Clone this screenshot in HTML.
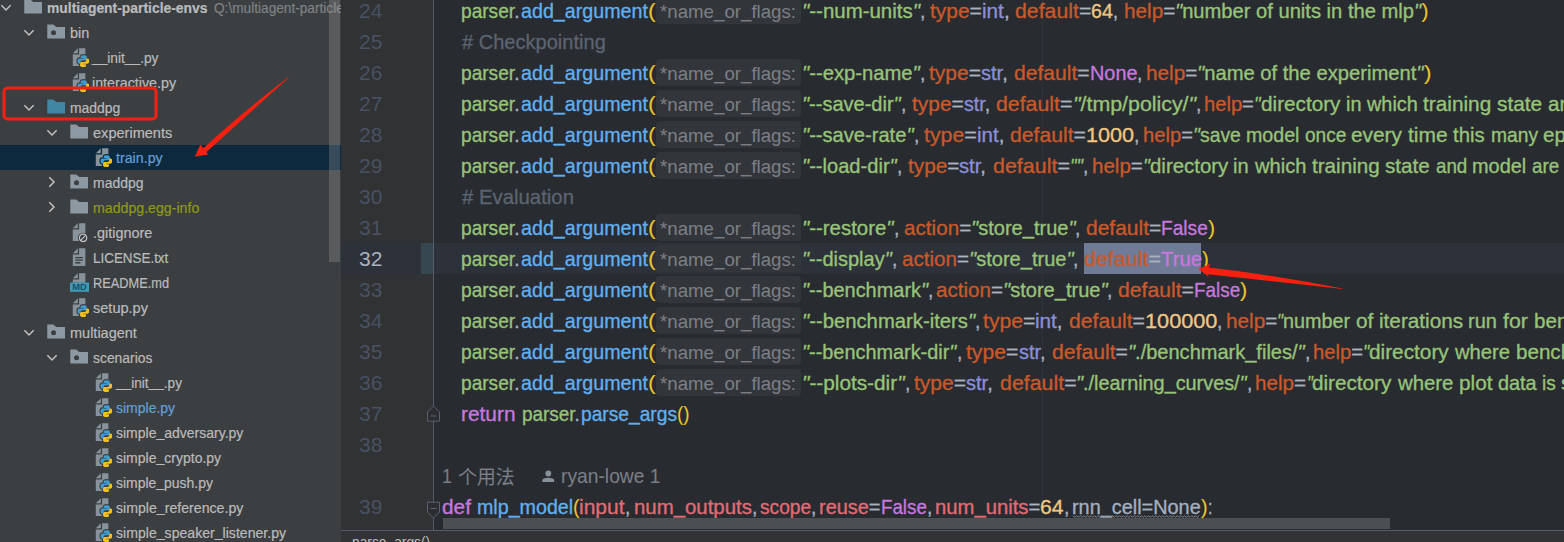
<!DOCTYPE html>
<html lang="zh"><head><meta charset="utf-8"><title>PyCharm</title>
<style>
html,body{margin:0;padding:0}
body{width:1564px;height:542px;overflow:hidden;position:relative;background:#282b30;font-family:"Liberation Sans", "Noto Sans CJK SC", sans-serif;}
#tree{position:absolute;left:0;top:0;width:341px;height:542px;background:#3c3f41;overflow:hidden}
.tr{position:absolute;left:0;width:341px;height:25px;line-height:25px;font-size:14.5px;white-space:pre}
.tr.sel{background:#0d293e}
.ic{position:absolute;overflow:visible}
.tt{position:absolute;top:1px;-webkit-text-stroke:0.2px currentColor;transform-origin:0 50%;white-space:pre}
#sb{position:absolute;left:329px;top:0;width:11.1px;height:262px;background:rgba(166,166,166,0.28)}
#gut{position:absolute;left:341px;top:0;width:92px;height:530px;background:#303234}
#gline{position:absolute;left:433px;top:0;width:1px;height:530px;background:#555a6b}
.gn{position:absolute;left:358.6px;height:31px;line-height:31px;font-size:21px;color:#495162;transform-origin:0 50%;white-space:pre}
.gn.cur{color:#abb2bf}
#ed{position:absolute;left:0;top:0;width:1564px;height:530px;overflow:hidden}
.ln{position:absolute;left:0;width:1564px;height:31px;line-height:31px;font-size:21px;white-space:pre;-webkit-text-stroke:0.35px currentColor}
.k{position:absolute;top:0;transform-origin:0 50%;white-space:pre}
.k i{font-style:normal}
u{text-decoration:none;position:relative;top:-0.07em}
em{font-style:italic}
.hb{position:absolute;left:656px;top:2px;width:145.3px;height:27px;border-radius:4px;background:#323539}
.ht{position:absolute;left:660.4px;top:1px;font-size:19.25px;color:#7b7e84;transform-origin:0 50%;white-space:pre;-webkit-text-stroke:0.1px currentColor}
.y,.h{-webkit-text-stroke:0.1px currentColor}
.g{color:#98c379}
.b{color:#61afef}
.y{color:#e8c52e}
.o{color:#c8592b}
.p{color:#c678dd}
.u{color:#8a8fd8}
.w{color:#abb2bf}
.c{color:#5c6370}
.r{color:#e06c75}
.n{color:#efc783}
.h{color:#7b7e84}
.d{color:#a4b0c0}

#curg{position:absolute;left:341px;top:243px;width:80px;height:31px;background:#2c313a}
#curm{position:absolute;left:421px;top:243px;width:12px;height:31px;background:#36474f}
#curl{position:absolute;left:434px;top:243px;width:1130px;height:31px;background:#2c313a}
#selbg{position:absolute;left:1083.6px;top:243px;width:117.6px;height:31px;background:#6f7b97}
#margin{position:absolute;left:1042px;top:0;width:1px;height:530px;background:#2f3238}
#hs{position:absolute;left:443px;top:518px;width:946.5px;height:10.8px;background:#4b4f52}
#bot{position:absolute;left:341px;top:530px;width:1223px;height:12px;background:#313335;border-top:1px solid #555b6e;box-sizing:border-box;overflow:hidden}
#bc{position:absolute;left:351.6px;top:529.8px;font-size:14.5px;line-height:25px;color:#bbbbbb;white-space:pre;transform-origin:0 50%}
#ann{position:absolute;left:0;top:0}
</style></head>
<body>
<svg width="0" height="0" style="position:absolute"><defs>
<symbol id="folder" viewBox="0 0 16 16"><path d="M1,2 H5.7 L8.2,4.05 H15.1 V13 H1 Z" fill="#8d99a2"/></symbol>
<symbol id="folderteal" viewBox="0 0 16 16"><path d="M1,2 H5.7 L8.2,4.05 H15.1 V13 H1 Z" fill="#3f87a2"/></symbol>
<symbol id="folderdot" viewBox="0 0 16 16"><path d="M1,2 H5.7 L8.2,4.05 H15.1 V13 H1 Z" fill="#8d99a2"/><circle cx="6" cy="8.55" r="2" fill="#3c3f41"/></symbol>
<symbol id="py" viewBox="0 0 16 16"><path d="M7,1 L3,5 H7 Z M8,1 V6 H3 V15 H13 V1 Z" fill="#87929a"/>
<g transform="translate(6.75,6.5) scale(0.78)"><path d="M6,0 C3.5,0 3.3,1.1 3.3,1.6 V2.9 H6.1 V3.3 H2.1 C1,3.3 0,4 0,6 C0,8 0.9,8.7 1.9,8.7 H3.1 V7.1 C3.1,6 4,5.1 5,5.1 H7.8 C8.7,5.1 9.4,4.4 9.4,3.5 V1.6 C9.4,0.7 8.5,0 6,0 Z M6,12 C8.5,12 8.7,10.9 8.7,10.4 V9.1 H5.9 V8.7 H9.9 C11,8.7 12,8 12,6 C12,4 11.1,3.3 10.1,3.3 H8.9 V4.9 C8.9,6 8,6.9 7,6.9 H4.2 C3.3,6.9 2.6,7.6 2.6,8.5 V10.4 C2.6,11.3 3.5,12 6,12 Z" fill="var(--obg,#3c3f41)" stroke="var(--obg,#3c3f41)" stroke-width="2.2" stroke-linejoin="round"/>
<path d="M6,0 C3.5,0 3.3,1.1 3.3,1.6 V2.9 H6.1 V3.3 H2.1 C1,3.3 0,4 0,6 C0,8 0.9,8.7 1.9,8.7 H3.1 V7.1 C3.1,6 4,5.1 5,5.1 H7.8 C8.7,5.1 9.4,4.4 9.4,3.5 V1.6 C9.4,0.7 8.5,0 6,0 Z" fill="#3e9cd0"/><path d="M6,12 C8.5,12 8.7,10.9 8.7,10.4 V9.1 H5.9 V8.7 H9.9 C11,8.7 12,8 12,6 C12,4 11.1,3.3 10.1,3.3 H8.9 V4.9 C8.9,6 8,6.9 7,6.9 H4.2 C3.3,6.9 2.6,7.6 2.6,8.5 V10.4 C2.6,11.3 3.5,12 6,12 Z" fill="#f3c31c"/></g></symbol>
<symbol id="txt" viewBox="0 0 16 16"><path d="M7,1 L3,5 H7 Z M8,1 V6 H3 V15 H13 V1 Z" fill="#87929a"/><path d="M5,8.5 H11 M5,10.5 H11 M5,12.5 H9" stroke="#3c3f41" stroke-width="1"/></symbol>
<symbol id="git" viewBox="0 0 16 16"><path d="M7,1 L3,5 H7 Z M8,1 V6 H3 V15 H13 V1 Z" fill="#87929a"/><circle cx="11.2" cy="12.6" r="4.1" fill="#3c3f41"/><circle cx="11.2" cy="12.6" r="2.9" fill="none" stroke="#c4c6c8" stroke-width="0.95"/><path d="M9.2,14.6 L13.2,10.6" stroke="#c4c6c8" stroke-width="0.95"/></symbol>
<symbol id="md" viewBox="0 0 16 16"><path d="M7,1 L3,5 H7 Z M8,1 V6 H3 V8.6 H13 V1 Z" fill="#87929a"/><rect x="0.8" y="8.4" width="15.1" height="7.3" fill="#3f9bb9"/><text x="8.35" y="14.6" text-anchor="middle" font-family="Liberation Sans, sans-serif" font-size="6.6" font-weight="bold" fill="#1e4f63" textLength="11.6" lengthAdjust="spacingAndGlyphs">MD</text></symbol>
<symbol id="person" viewBox="0 0 12 12"><circle cx="6" cy="3.5" r="2.9" fill="#87919a"/><path d="M0.2,11.8 V10.2 Q0.2,7.6 6,7.6 Q11.8,7.6 11.8,10.2 V11.8 Z" fill="#87919a"/></symbol>
</defs></svg>
<div id="ed">
<div id="curl"></div><div id="margin"></div><div id="selbg"></div>
<div class="ln" style="top:-5px"><span class="k" style="left:461.3px;transform:scaleX(0.9101)"><i class="g">parser</i><i class="w">.</i></span><span class="k b" style="left:520.8px;transform:scaleX(0.9370)">add<u>_</u>argument</span><span class="k y" style="left:647.7px;transform:scaleX(1.0857)">(</span><span class="hb"></span><span class="ht" style="transform:scaleX(0.9701)">*name<u>_</u>or<u>_</u>flags:</span><span class="k g" style="left:802.3px;transform:scaleX(0.9735)"><em>"</em>--num-units<em>"</em></span><span class="k w" style="left:920.2px;transform:scaleX(0.9200)">, </span><span class="k" style="left:929.8px;transform:scaleX(0.9968)"><i class="o">type</i><i class="w">=</i></span><span class="k" style="left:981.6px;transform:scaleX(0.9864)"><i class="u">int</i><i class="w">, </i></span><span class="k" style="left:1015.0px;transform:scaleX(1.0129)"><i class="o">default</i><i class="w">=</i></span><span class="k" style="left:1091.3px;transform:scaleX(0.9335)"><i class="n">64</i><i class="w">, </i></span><span class="k" style="left:1124.0px;transform:scaleX(0.9891)"><i class="o">help</i><i class="w">=</i></span><span class="k g" style="left:1175.4px;transform:scaleX(0.9593)"><em>"</em>number of units in the mlp<em>"</em></span><span class="k y" style="left:1421.5px;transform:scaleX(1.0000)">)</span></div>
<div class="ln" style="top:26px"><span class="k c" style="left:461.8px;transform:scaleX(0.9548)"># Checkpointing</span></div>
<div class="ln" style="top:57px"><span class="k" style="left:461.3px;transform:scaleX(0.9101)"><i class="g">parser</i><i class="w">.</i></span><span class="k b" style="left:520.8px;transform:scaleX(0.9370)">add<u>_</u>argument</span><span class="k y" style="left:647.7px;transform:scaleX(1.0857)">(</span><span class="hb"></span><span class="ht" style="transform:scaleX(0.9701)">*name<u>_</u>or<u>_</u>flags:</span><span class="k g" style="left:802.3px;transform:scaleX(0.9625)"><em>"</em>--exp-name<em>"</em></span><span class="k w" style="left:920.0px;transform:scaleX(0.9200)">, </span><span class="k" style="left:928.5px;transform:scaleX(1.0006)"><i class="o">type</i><i class="w">=</i></span><span class="k" style="left:980.5px;transform:scaleX(0.9543)"><i class="u">str</i><i class="w">, </i></span><span class="k" style="left:1013.9px;transform:scaleX(1.0036)"><i class="o">default</i><i class="w">=</i></span><span class="k p" style="left:1089.5px;transform:scaleX(0.9462)">None</span><span class="k w" style="left:1137.0px;transform:scaleX(0.9200)">, </span><span class="k" style="left:1145.7px;transform:scaleX(0.9871)"><i class="o">help</i><i class="w">=</i></span><span class="k g" style="left:1197.0px;transform:scaleX(0.9616)"><em>"</em>name of the experiment<em>"</em></span><span class="k y" style="left:1423.5px;transform:scaleX(1.0714)">)</span></div>
<div class="ln" style="top:88px"><span class="k" style="left:461.3px;transform:scaleX(0.9101)"><i class="g">parser</i><i class="w">.</i></span><span class="k b" style="left:520.8px;transform:scaleX(0.9370)">add<u>_</u>argument</span><span class="k y" style="left:647.7px;transform:scaleX(1.0857)">(</span><span class="hb"></span><span class="ht" style="transform:scaleX(0.9701)">*name<u>_</u>or<u>_</u>flags:</span><span class="k g" style="left:802.3px;transform:scaleX(0.9528)"><em>"</em>--save-dir<em>"</em></span><span class="k w" style="left:901.0px;transform:scaleX(0.9200)">, </span><span class="k" style="left:911.8px;transform:scaleX(0.9968)"><i class="o">type</i><i class="w">=</i></span><span class="k" style="left:963.6px;transform:scaleX(0.9371)"><i class="u">str</i><i class="w">, </i></span><span class="k" style="left:996.4px;transform:scaleX(1.0142)"><i class="o">default</i><i class="w">=</i></span><span class="k g" style="left:1072.8px;transform:scaleX(1.0164)"><em>"</em>/tmp/policy/<em>"</em></span><span class="k w" style="left:1195.9px;transform:scaleX(0.9200)">, </span><span class="k" style="left:1204.0px;transform:scaleX(0.9602)"><i class="o">help</i><i class="w">=</i></span><span class="k g" style="left:1253.9px;transform:scaleX(0.8837)"><em>"</em></span><span class="k g" style="left:1260.5px;transform:scaleX(0.9866)">directory </span><span class="k g" style="left:1345.7px;transform:scaleX(0.9465)">in </span><span class="k g" style="left:1366.7px;transform:scaleX(0.9457)">which </span><span class="k g" style="left:1423.0px;transform:scaleX(0.9904)">training </span><span class="k g" style="left:1497.0px;transform:scaleX(0.9927)">state </span><span class="k" style="left:1548.0px;transform:scaleX(0.9800)"><i class="g">and </i><i class="g">model </i><i class="g">are </i><i class="g">saved<em>"</em></i></span></div>
<div class="ln" style="top:119px"><span class="k" style="left:461.3px;transform:scaleX(0.9101)"><i class="g">parser</i><i class="w">.</i></span><span class="k b" style="left:520.8px;transform:scaleX(0.9370)">add<u>_</u>argument</span><span class="k y" style="left:647.7px;transform:scaleX(1.0857)">(</span><span class="hb"></span><span class="ht" style="transform:scaleX(0.9701)">*name<u>_</u>or<u>_</u>flags:</span><span class="k g" style="left:802.3px;transform:scaleX(0.9576)"><em>"</em>--save-rate<em>"</em></span><span class="k w" style="left:913.8px;transform:scaleX(0.9200)">, </span><span class="k" style="left:923.9px;transform:scaleX(1.0160)"><i class="o">type</i><i class="w">=</i></span><span class="k" style="left:976.7px;transform:scaleX(0.9776)"><i class="u">int</i><i class="w">, </i></span><span class="k" style="left:1009.8px;transform:scaleX(1.0076)"><i class="o">default</i><i class="w">=</i></span><span class="k n" style="left:1085.7px;transform:scaleX(1.0296)">1000</span><span class="k w" style="left:1133.8px;transform:scaleX(0.9200)">, </span><span class="k" style="left:1142.6px;transform:scaleX(0.9621)"><i class="o">help</i><i class="w">=</i></span><span class="k g" style="left:1192.6px;transform:scaleX(0.9238)"><em>"</em></span><span class="k g" style="left:1199.5px;transform:scaleX(0.9203)">save </span><span class="k g" style="left:1245.7px;transform:scaleX(0.9345)">model </span><span class="k g" style="left:1304.6px;transform:scaleX(0.9090)">once </span><span class="k g" style="left:1351.3px;transform:scaleX(0.9915)">every </span><span class="k g" style="left:1408.0px;transform:scaleX(0.9975)">time </span><span class="k g" style="left:1453.4px;transform:scaleX(0.9658)">this </span><span class="k g" style="left:1490.6px;transform:scaleX(0.9163)">many </span><span class="k" style="left:1543.0px;transform:scaleX(0.9800)"><i class="g">episodes </i><i class="g">are </i><i class="g">completed<em>"</em></i></span></div>
<div class="ln" style="top:150px"><span class="k" style="left:461.3px;transform:scaleX(0.9101)"><i class="g">parser</i><i class="w">.</i></span><span class="k b" style="left:520.8px;transform:scaleX(0.9370)">add<u>_</u>argument</span><span class="k y" style="left:647.7px;transform:scaleX(1.0857)">(</span><span class="hb"></span><span class="ht" style="transform:scaleX(0.9701)">*name<u>_</u>or<u>_</u>flags:</span><span class="k g" style="left:802.3px;transform:scaleX(0.9572)"><em>"</em>--load-dir<em>"</em></span><span class="k w" style="left:897.0px;transform:scaleX(0.9200)">, </span><span class="k" style="left:907.5px;transform:scaleX(0.9910)"><i class="o">type</i><i class="w">=</i></span><span class="k" style="left:959.0px;transform:scaleX(0.9600)"><i class="u">str</i><i class="w">, </i></span><span class="k" style="left:992.6px;transform:scaleX(1.0209)"><i class="o">default</i><i class="w">=</i></span><span class="k g" style="left:1069.5px;transform:scaleX(0.8712)"><em>"</em><em>"</em></span><span class="k w" style="left:1082.5px;transform:scaleX(0.9200)">, </span><span class="k" style="left:1091.8px;transform:scaleX(0.9775)"><i class="o">help</i><i class="w">=</i></span><span class="k g" style="left:1142.6px;transform:scaleX(0.9238)"><em>"</em></span><span class="k g" style="left:1149.5px;transform:scaleX(0.9715)">directory </span><span class="k g" style="left:1233.4px;transform:scaleX(0.9555)">in </span><span class="k g" style="left:1254.6px;transform:scaleX(0.9575)">which </span><span class="k g" style="left:1311.6px;transform:scaleX(0.9824)">training </span><span class="k g" style="left:1385.0px;transform:scaleX(0.9830)">state </span><span class="k g" style="left:1435.5px;transform:scaleX(0.8930)">and </span><span class="k g" style="left:1472.0px;transform:scaleX(0.9471)">model </span><span class="k g" style="left:1531.7px;transform:scaleX(0.8926)">are </span><span class="k g" style="left:1564.0px;transform:scaleX(0.9800)">loaded<em>"</em></span></div>
<div class="ln" style="top:181px"><span class="k c" style="left:461.8px;transform:scaleX(0.9689)"># Evaluation</span></div>
<div class="ln" style="top:212px"><span class="k" style="left:461.3px;transform:scaleX(0.9101)"><i class="g">parser</i><i class="w">.</i></span><span class="k b" style="left:520.8px;transform:scaleX(0.9370)">add<u>_</u>argument</span><span class="k y" style="left:647.7px;transform:scaleX(1.0857)">(</span><span class="hb"></span><span class="ht" style="transform:scaleX(0.9701)">*name<u>_</u>or<u>_</u>flags:</span><span class="k g" style="left:802.3px;transform:scaleX(0.9707)"><em>"</em>--restore<em>"</em></span><span class="k w" style="left:893.8px;transform:scaleX(0.9200)">, </span><span class="k" style="left:903.6px;transform:scaleX(0.9837)"><i class="o">action</i><i class="w">=</i></span><span class="k g" style="left:970.8px;transform:scaleX(0.9555)"><em>"</em>store<u>_</u>true<em>"</em></span><span class="k w" style="left:1075.4px;transform:scaleX(0.9200)">, </span><span class="k" style="left:1085.7px;transform:scaleX(0.9996)"><i class="o">default</i><i class="w">=</i></span><span class="k p" style="left:1161.0px;transform:scaleX(0.9112)">False</span><span class="k y" style="left:1207.8px;transform:scaleX(1.0143)">)</span></div>
<div class="ln" style="top:243px"><span class="k" style="left:461.3px;transform:scaleX(0.9101)"><i class="g">parser</i><i class="w">.</i></span><span class="k b" style="left:520.8px;transform:scaleX(0.9370)">add<u>_</u>argument</span><span class="k y" style="left:647.7px;transform:scaleX(1.0857)">(</span><span class="hb"></span><span class="ht" style="transform:scaleX(0.9701)">*name<u>_</u>or<u>_</u>flags:</span><span class="k g" style="left:802.3px;transform:scaleX(0.9516)"><em>"</em>--display<em>"</em></span><span class="k w" style="left:892.0px;transform:scaleX(0.9200)">, </span><span class="k" style="left:901.6px;transform:scaleX(0.9823)"><i class="o">action</i><i class="w">=</i></span><span class="k g" style="left:968.7px;transform:scaleX(0.9555)"><em>"</em>store<u>_</u>true<em>"</em></span><span class="k w" style="left:1073.3px;transform:scaleX(0.9200)">, </span><span class="k" style="left:1083.6px;transform:scaleX(1.0209)"><i class="o">default</i><i class="w">=</i></span><span class="k p" style="left:1160.5px;transform:scaleX(0.9692)">True</span><span class="k y" style="left:1201.6px;transform:scaleX(0.9714)">)</span></div>
<div class="ln" style="top:274px"><span class="k" style="left:461.3px;transform:scaleX(0.9101)"><i class="g">parser</i><i class="w">.</i></span><span class="k b" style="left:520.8px;transform:scaleX(0.9370)">add<u>_</u>argument</span><span class="k y" style="left:647.7px;transform:scaleX(1.0857)">(</span><span class="hb"></span><span class="ht" style="transform:scaleX(0.9701)">*name<u>_</u>or<u>_</u>flags:</span><span class="k g" style="left:802.3px;transform:scaleX(0.9497)"><em>"</em>--benchmark<em>"</em></span><span class="k w" style="left:928.4px;transform:scaleX(0.9200)">, </span><span class="k" style="left:935.7px;transform:scaleX(0.9823)"><i class="o">action</i><i class="w">=</i></span><span class="k g" style="left:1002.8px;transform:scaleX(0.9555)"><em>"</em>store<u>_</u>true<em>"</em></span><span class="k w" style="left:1107.4px;transform:scaleX(0.9200)">, </span><span class="k" style="left:1117.7px;transform:scaleX(1.0076)"><i class="o">default</i><i class="w">=</i></span><span class="k p" style="left:1193.6px;transform:scaleX(0.8995)">False</span><span class="k y" style="left:1239.8px;transform:scaleX(1.0286)">)</span></div>
<div class="ln" style="top:305px"><span class="k" style="left:461.3px;transform:scaleX(0.9101)"><i class="g">parser</i><i class="w">.</i></span><span class="k b" style="left:520.8px;transform:scaleX(0.9370)">add<u>_</u>argument</span><span class="k y" style="left:647.7px;transform:scaleX(1.0857)">(</span><span class="hb"></span><span class="ht" style="transform:scaleX(0.9701)">*name<u>_</u>or<u>_</u>flags:</span><span class="k g" style="left:802.3px;transform:scaleX(0.9646)"><em>"</em>--benchmark-iters<em>"</em></span><span class="k w" style="left:975.4px;transform:scaleX(0.9200)">, </span><span class="k" style="left:983.0px;transform:scaleX(1.0083)"><i class="o">type</i><i class="w">=</i></span><span class="k" style="left:1035.4px;transform:scaleX(0.9835)"><i class="u">int</i><i class="w">, </i></span><span class="k" style="left:1068.7px;transform:scaleX(1.0076)"><i class="o">default</i><i class="w">=</i></span><span class="k n" style="left:1144.6px;transform:scaleX(1.0331)">100000</span><span class="k w" style="left:1217.0px;transform:scaleX(0.9200)">, </span><span class="k" style="left:1225.7px;transform:scaleX(0.9871)"><i class="o">help</i><i class="w">=</i></span><span class="k g" style="left:1277.0px;transform:scaleX(0.8033)"><em>"</em></span><span class="k g" style="left:1283.0px;transform:scaleX(0.9410)">number </span><span class="k g" style="left:1355.5px;transform:scaleX(0.9889)">of </span><span class="k g" style="left:1378.6px;transform:scaleX(0.9863)">iterations </span><span class="k g" style="left:1468.4px;transform:scaleX(0.9506)">run </span><span class="k g" style="left:1502.8px;transform:scaleX(1.0117)">for </span><span class="k g" style="left:1533.5px;transform:scaleX(0.9800)">benchmarking<em>"</em></span></div>
<div class="ln" style="top:336px"><span class="k" style="left:461.3px;transform:scaleX(0.9101)"><i class="g">parser</i><i class="w">.</i></span><span class="k b" style="left:520.8px;transform:scaleX(0.9370)">add<u>_</u>argument</span><span class="k y" style="left:647.7px;transform:scaleX(1.0857)">(</span><span class="hb"></span><span class="ht" style="transform:scaleX(0.9701)">*name<u>_</u>or<u>_</u>flags:</span><span class="k g" style="left:802.3px;transform:scaleX(0.9460)"><em>"</em>--benchmark-dir<em>"</em></span><span class="k w" style="left:956.6px;transform:scaleX(0.9200)">, </span><span class="k" style="left:966.4px;transform:scaleX(1.0064)"><i class="o">type</i><i class="w">=</i></span><span class="k" style="left:1018.7px;transform:scaleX(0.9514)"><i class="u">str</i><i class="w">, </i></span><span class="k" style="left:1052.0px;transform:scaleX(1.0089)"><i class="o">default</i><i class="w">=</i></span><span class="k g" style="left:1128.0px;transform:scaleX(0.9529)"><em>"</em>./benchmark<u>_</u>files/<em>"</em></span><span class="k w" style="left:1304.6px;transform:scaleX(0.9200)">, </span><span class="k" style="left:1312.9px;transform:scaleX(0.9640)"><i class="o">help</i><i class="w">=</i></span><span class="k g" style="left:1363.0px;transform:scaleX(0.8435)"><em>"</em></span><span class="k g" style="left:1369.3px;transform:scaleX(0.9900)">directory </span><span class="k g" style="left:1454.8px;transform:scaleX(0.9630)">where </span><span class="k" style="left:1515.5px;transform:scaleX(0.9800)"><i class="g">benchmark </i><i class="g">data </i><i class="g">is </i><i class="g">saved<em>"</em></i></span></div>
<div class="ln" style="top:367px"><span class="k" style="left:461.3px;transform:scaleX(0.9101)"><i class="g">parser</i><i class="w">.</i></span><span class="k b" style="left:520.8px;transform:scaleX(0.9370)">add<u>_</u>argument</span><span class="k y" style="left:647.7px;transform:scaleX(1.0857)">(</span><span class="hb"></span><span class="ht" style="transform:scaleX(0.9701)">*name<u>_</u>or<u>_</u>flags:</span><span class="k g" style="left:802.3px;transform:scaleX(0.9894)"><em>"</em>--plots-dir<em>"</em></span><span class="k w" style="left:904.8px;transform:scaleX(0.9200)">, </span><span class="k" style="left:914.4px;transform:scaleX(1.0006)"><i class="o">type</i><i class="w">=</i></span><span class="k" style="left:966.4px;transform:scaleX(0.9543)"><i class="u">str</i><i class="w">, </i></span><span class="k" style="left:999.8px;transform:scaleX(1.0169)"><i class="o">default</i><i class="w">=</i></span><span class="k g" style="left:1076.4px;transform:scaleX(0.9443)"><em>"</em>./learning<u>_</u>curves/<em>"</em></span><span class="k w" style="left:1247.0px;transform:scaleX(0.9200)">, </span><span class="k" style="left:1255.4px;transform:scaleX(0.9833)"><i class="o">help</i><i class="w">=</i></span><span class="k g" style="left:1306.5px;transform:scaleX(0.7900)"><em>"</em></span><span class="k g" style="left:1312.4px;transform:scaleX(0.9854)">directory </span><span class="k g" style="left:1397.5px;transform:scaleX(0.9694)">where </span><span class="k g" style="left:1458.6px;transform:scaleX(0.9873)">plot </span><span class="k g" style="left:1497.8px;transform:scaleX(0.9461)">data </span><span class="k g" style="left:1542.0px;transform:scaleX(0.9048)">is </span><span class="k g" style="left:1561.0px;transform:scaleX(0.9800)">saved<em>"</em></span></div>
<div class="ln" style="top:398px"><span class="k p" style="left:461.3px;transform:scaleX(0.9934)">return </span><span class="k" style="left:521.6px;transform:scaleX(0.9010)"><i class="g">parser</i><i class="w">.</i></span><span class="k b" style="left:580.5px;transform:scaleX(0.9137)">parse<u>_</u>args</span><span class="k y" style="left:676.5px;transform:scaleX(0.8929)">()</span></div>
<div class="ln" style="top:460px"><span class="k h" style="left:441.6px;transform:scaleX(0.8556)">1</span> <span class="k h" style="left:458.3px;top:2px;font-size:18.8px">个用法</span></div>
<div class="ln" style="top:460px"><svg class="ic" style="left:542.4px;top:9.6px" width="12.6" height="12.2"><use href="#person"/></svg><span class="k h" style="left:560.5px;transform:scaleX(0.9165)">ryan-lowe 1</span></div>
<div class="ln" style="top:491px"><span class="k p" style="left:442.0px;transform:scaleX(0.9905)">def </span><span class="k b" style="left:476.7px;transform:scaleX(0.9356)">mlp<u>_</u>model</span><span class="k y" style="left:572.8px;transform:scaleX(0.9286)">(</span><span class="k r" style="left:579.3px;transform:scaleX(0.9990)">input</span><span class="k w" style="left:624.8px;transform:scaleX(0.9200)">, </span><span class="k r" style="left:633.9px;transform:scaleX(0.9710)">num<u>_</u>outputs</span><span class="k w" style="left:751.8px;transform:scaleX(0.9200)">, </span><span class="k r" style="left:759.5px;transform:scaleX(0.9135)">scope</span><span class="k w" style="left:810.7px;transform:scaleX(0.9200)">, </span><span class="k" style="left:819.4px;transform:scaleX(0.9491)"><i class="r">reuse</i><i class="w">=</i></span><span class="k p" style="left:880.9px;transform:scaleX(0.8918)">False</span><span class="k w" style="left:926.7px;transform:scaleX(0.9200)">, </span><span class="k" style="left:934.9px;transform:scaleX(0.9647)"><i class="r">num<u>_</u>units</i><i class="w">=</i></span><span class="k n" style="left:1040.2px;transform:scaleX(1.0060)">64</span><span class="k w" style="left:1063.7px;transform:scaleX(0.9200)">, </span><span class="k d" style="left:1072.3px;transform:scaleX(0.9462)">rnn<u>_</u>cell=None</span><span class="k y" style="left:1201.0px;transform:scaleX(0.9429)">)</span><span class="k w" style="left:1207.6px;transform:scaleX(0.7529)">:</span></div>
<svg class="ic" style="left:0;top:0" width="1564" height="530"><polyline points="1073.0,515.6 1074.8,517.4 1076.6,515.6 1078.4,517.4 1080.2,515.6 1082.0,517.4 1083.8,515.6 1085.6,517.4 1087.4,515.6 1089.2,517.4 1091.0,515.6 1092.8,517.4 1094.6,515.6 1096.4,517.4 1098.2,515.6 1100.0,517.4 1101.8,515.6 1103.6,517.4 1105.4,515.6 1107.2,517.4 1109.0,515.6 1110.8,517.4 1112.6,515.6 1114.4,517.4 1116.2,515.6 1118.0,517.4 1119.8,515.6 1121.6,517.4 1123.4,515.6 1125.2,517.4 1127.0,515.6 1128.8,517.4 1130.6,515.6 1132.4,517.4 1134.2,515.6 1136.0,517.4 1137.8,515.6 1139.6,517.4 1141.4,515.6 1143.2,517.4 1145.0,515.6 1146.8,517.4 1148.6,515.6 1150.4,517.4 1152.2,515.6 1154.0,517.4 1155.8,515.6 1157.6,517.4 1159.4,515.6 1161.2,517.4 1163.0,515.6 1164.8,517.4 1166.6,515.6 1168.4,517.4 1170.2,515.6 1172.0,517.4 1173.8,515.6 1175.6,517.4 1177.4,515.6 1179.2,517.4 1181.0,515.6 1182.8,517.4 1184.6,515.6 1186.4,517.4 1188.2,515.6 1190.0,517.4 1191.8,515.6 1193.6,517.4 1195.4,515.6 1197.2,517.4 1199.0,515.6" fill="none" stroke="#8a9099" stroke-width="0.9"/></svg>
<div id="hs"></div>
</div>
<div id="gut"></div><div id="curg"></div><div id="curm"></div><div id="gline"></div>
<span class="gn" style="top:-5px;transform:scaleX(1.0017)">24</span><span class="gn" style="top:26px;transform:scaleX(1.0017)">25</span><span class="gn" style="top:57px;transform:scaleX(1.0017)">26</span><span class="gn" style="top:88px;transform:scaleX(1.0017)">27</span><span class="gn" style="top:119px;transform:scaleX(1.0017)">28</span><span class="gn" style="top:150px;transform:scaleX(1.0017)">29</span><span class="gn" style="top:181px;transform:scaleX(1.0017)">30</span><span class="gn" style="top:212px;transform:scaleX(1.0017)">31</span><span class="gn cur" style="top:243px;transform:scaleX(1.0017)">32</span><span class="gn" style="top:274px;transform:scaleX(1.0017)">33</span><span class="gn" style="top:305px;transform:scaleX(1.0017)">34</span><span class="gn" style="top:336px;transform:scaleX(1.0017)">35</span><span class="gn" style="top:367px;transform:scaleX(1.0017)">36</span><span class="gn" style="top:398px;transform:scaleX(1.0017)">37</span><span class="gn" style="top:429px;transform:scaleX(1.0017)">38</span><span class="gn" style="top:491px;transform:scaleX(1.0017)">39</span>
<svg class="ic" style="left:0;top:0" width="445" height="530">
<path d="M427.5,421.2 V412 L433.5,406 L439.5,412 V421.2 Z" fill="#2c2e32" stroke="#5a6072" stroke-width="1"/><path d="M430.5,416 H436.5" stroke="#5a6072" stroke-width="1"/>
<path d="M427.5,502.2 V512 L433.5,518.2 L439.5,512 V502.2 Z" fill="#2c2e32" stroke="#5a6072" stroke-width="1"/><path d="M430.5,508.5 H436.5" stroke="#5a6072" stroke-width="1"/>
</svg>
<div id="bot"></div><span id="bc" style="transform:scaleX(0.9513)">parse_args()</span>
<div id="tree">
<div class="tr" style="top:-5px"><svg class="ic" style="left:-0.20px;top:8.6px" width="12" height="8"><polyline points="1.35,1.3 6,6 10.65,1.3" fill="none" stroke="#c0c2c4" stroke-width="1.5"/></svg><svg class="ic" style="left:22.84px;top:1.85px" width="20.16" height="20.16"><use href="#folder"/></svg><span class="tt" style="left:46.9px;color:#bbbbbb;font-weight:bold;transform:scaleX(0.9577)">multiagent-particle-envs</span><span class="tt" style="left:213.8px;color:#7e8285;transform:scaleX(0.9417)">Q:\multiagent-particle-envs</span></div>
<div class="tr" style="top:20px"><svg class="ic" style="left:22.75px;top:8.6px" width="12" height="8"><polyline points="1.35,1.3 6,6 10.65,1.3" fill="none" stroke="#c0c2c4" stroke-width="1.5"/></svg><svg class="ic" style="left:45.84px;top:1.85px" width="20.16" height="20.16"><use href="#folderdot"/></svg><span class="tt" style="left:69.7px;color:#bbbbbb;font-weight:normal;transform:scaleX(0.9969)">bin</span></div>
<div class="tr" style="top:45px"><svg class="ic" style="left:69.02px;top:1.85px" width="20.16" height="20.16"><use href="#py"/></svg><span class="tt" style="left:92.3px;color:#bbbbbb;font-weight:normal;transform:scaleX(0.9467)"><u>_</u><u>_</u>init<u>_</u><u>_</u>.py</span></div>
<div class="tr" style="top:70px"><svg class="ic" style="left:69.02px;top:1.85px" width="20.16" height="20.16"><use href="#py"/></svg><span class="tt" style="left:92.3px;color:#bbbbbb;font-weight:normal;transform:scaleX(0.9843)">interactive.py</span></div>
<div class="tr" style="top:95px"><svg class="ic" style="left:22.75px;top:8.6px" width="12" height="8"><polyline points="1.35,1.3 6,6 10.65,1.3" fill="none" stroke="#c0c2c4" stroke-width="1.5"/></svg><svg class="ic" style="left:45.84px;top:1.85px" width="20.16" height="20.16"><use href="#folderteal"/></svg><span class="tt" style="left:69.7px;color:#bbbbbb;font-weight:normal;transform:scaleX(0.9598)">maddpg</span></div>
<div class="tr" style="top:120px"><svg class="ic" style="left:46.00px;top:8.6px" width="12" height="8"><polyline points="1.35,1.3 6,6 10.65,1.3" fill="none" stroke="#c0c2c4" stroke-width="1.5"/></svg><svg class="ic" style="left:68.74px;top:1.85px" width="20.16" height="20.16"><use href="#folder"/></svg><span class="tt" style="left:92.7px;color:#bbbbbb;font-weight:normal;transform:scaleX(1.0040)">experiments</span></div>
<div class="tr sel" style="top:145px"><svg class="ic" style="left:92.02px;top:1.85px;--obg:#0d293e" width="20.16" height="20.16"><use href="#py"/></svg><span class="tt" style="left:116.0px;color:#649fd6;font-weight:normal;transform:scaleX(0.9819)">train.py</span></div>
<div class="tr" style="top:170px"><svg class="ic" style="left:47.60px;top:6px" width="8" height="12"><polyline points="1.3,1.2 6,5.95 1.3,10.7" fill="none" stroke="#c0c2c4" stroke-width="1.5"/></svg><svg class="ic" style="left:68.74px;top:1.85px" width="20.16" height="20.16"><use href="#folderdot"/></svg><span class="tt" style="left:92.7px;color:#bbbbbb;font-weight:normal;transform:scaleX(0.9636)">maddpg</span></div>
<div class="tr" style="top:195px"><svg class="ic" style="left:47.60px;top:6px" width="8" height="12"><polyline points="1.3,1.2 6,5.95 1.3,10.7" fill="none" stroke="#c0c2c4" stroke-width="1.5"/></svg><svg class="ic" style="left:68.74px;top:1.85px" width="20.16" height="20.16"><use href="#folder"/></svg><span class="tt" style="left:92.7px;color:#8f9a14;font-weight:normal;transform:scaleX(0.9768)">maddpg.egg-info</span></div>
<div class="tr" style="top:220px"><svg class="ic" style="left:68.72px;top:1.85px" width="20.16" height="20.16"><use href="#git"/></svg><span class="tt" style="left:92.7px;color:#bbbbbb;font-weight:normal;transform:scaleX(0.9957)">.gitignore</span></div>
<div class="tr" style="top:245px"><svg class="ic" style="left:68.72px;top:1.85px" width="20.16" height="20.16"><use href="#txt"/></svg><span class="tt" style="left:92.7px;color:#bbbbbb;font-weight:normal;transform:scaleX(0.9252)">LICENSE.txt</span></div>
<div class="tr" style="top:270px"><svg class="ic" style="left:68.99px;top:1.85px" width="20.16" height="20.16"><use href="#md"/></svg><span class="tt" style="left:92.7px;color:#bbbbbb;font-weight:normal;transform:scaleX(0.8815)">README.md</span></div>
<div class="tr" style="top:295px"><svg class="ic" style="left:69.02px;top:1.85px" width="20.16" height="20.16"><use href="#py"/></svg><span class="tt" style="left:92.7px;color:#bbbbbb;font-weight:normal;transform:scaleX(1.0031)">setup.py</span></div>
<div class="tr" style="top:320px"><svg class="ic" style="left:22.75px;top:8.6px" width="12" height="8"><polyline points="1.35,1.3 6,6 10.65,1.3" fill="none" stroke="#c0c2c4" stroke-width="1.5"/></svg><svg class="ic" style="left:45.84px;top:1.85px" width="20.16" height="20.16"><use href="#folderdot"/></svg><span class="tt" style="left:69.7px;color:#bbbbbb;font-weight:normal;transform:scaleX(0.9999)">multiagent</span></div>
<div class="tr" style="top:345px"><svg class="ic" style="left:46.00px;top:8.6px" width="12" height="8"><polyline points="1.35,1.3 6,6 10.65,1.3" fill="none" stroke="#c0c2c4" stroke-width="1.5"/></svg><svg class="ic" style="left:68.74px;top:1.85px" width="20.16" height="20.16"><use href="#folderdot"/></svg><span class="tt" style="left:92.7px;color:#bbbbbb;font-weight:normal;transform:scaleX(0.9571)">scenarios</span></div>
<div class="tr" style="top:370px"><svg class="ic" style="left:92.02px;top:1.85px" width="20.16" height="20.16"><use href="#py"/></svg><span class="tt" style="left:115.6px;color:#bbbbbb;font-weight:normal;transform:scaleX(0.9395)"><u>_</u><u>_</u>init<u>_</u><u>_</u>.py</span></div>
<div class="tr" style="top:395px"><svg class="ic" style="left:92.02px;top:1.85px" width="20.16" height="20.16"><use href="#py"/></svg><span class="tt" style="left:115.6px;color:#649fd6;font-weight:normal;transform:scaleX(0.9649)">simple.py</span></div>
<div class="tr" style="top:420px"><svg class="ic" style="left:92.02px;top:1.85px" width="20.16" height="20.16"><use href="#py"/></svg><span class="tt" style="left:115.6px;color:#bbbbbb;font-weight:normal;transform:scaleX(0.9651)">simple<u>_</u>adversary.py</span></div>
<div class="tr" style="top:445px"><svg class="ic" style="left:92.02px;top:1.85px" width="20.16" height="20.16"><use href="#py"/></svg><span class="tt" style="left:115.6px;color:#bbbbbb;font-weight:normal;transform:scaleX(0.9660)">simple<u>_</u>crypto.py</span></div>
<div class="tr" style="top:470px"><svg class="ic" style="left:92.02px;top:1.85px" width="20.16" height="20.16"><use href="#py"/></svg><span class="tt" style="left:115.6px;color:#bbbbbb;font-weight:normal;transform:scaleX(0.9618)">simple<u>_</u>push.py</span></div>
<div class="tr" style="top:495px"><svg class="ic" style="left:92.02px;top:1.85px" width="20.16" height="20.16"><use href="#py"/></svg><span class="tt" style="left:115.6px;color:#bbbbbb;font-weight:normal;transform:scaleX(0.9749)">simple<u>_</u>reference.py</span></div>
<div class="tr" style="top:520px"><svg class="ic" style="left:92.02px;top:1.85px" width="20.16" height="20.16"><use href="#py"/></svg><span class="tt" style="left:115.6px;color:#bbbbbb;font-weight:normal;transform:scaleX(0.9719)">simple<u>_</u>speaker<u>_</u>listener.py</span></div>
<div id="sb"></div></div>
<svg id="ann" width="1564" height="542">
<rect x="4" y="88" width="152" height="31" rx="3.5" fill="none" stroke="#f5200f" stroke-width="3"/>
<path d="M194.8,156.8 L200.3,144.8 L203.4,148.2 Q240,114 288,77.6 L288.3,78 L206.5,152 L208,154.5 Z" fill="#f5200f"/>
<path d="M1198.4,268.9 L1210.5,263.8 L1208.6,267.6 Q1275.5,275 1342.4,288.4 L1342.4,288.9 L1207.6,274.2 L1208.9,277.1 Z" fill="#f5200f"/>
</svg>
</body></html>
